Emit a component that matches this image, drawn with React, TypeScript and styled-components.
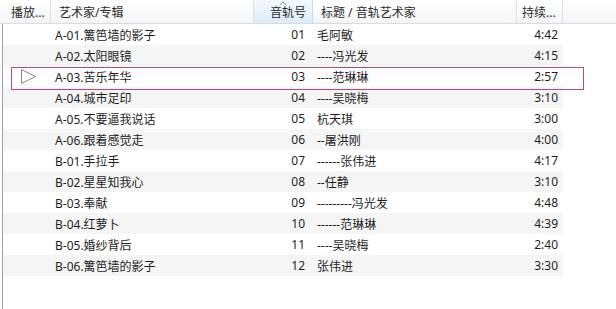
import React from "react";
import styled, { createGlobalStyle, css } from "styled-components";

const Global = createGlobalStyle`
  html, body { margin: 0; padding: 0; background: #fff; }
  body { font-family: "Noto Sans", "Noto Sans CJK SC", sans-serif; font-size: 12px; color: #1e1e1e; }
`;

const COLS = "51px 203px 59px 204px 46px 1fr";

const Frame = styled.div`
  width: 616px;
  height: 309px;
  display: flex;
  flex-direction: column;
  overflow: hidden;
  background: #fff;
`;

const Header = styled.div`
  display: grid;
  grid-template-columns: ${COLS};
  height: 24px;
  box-sizing: border-box;
  background: linear-gradient(#ffffff, #f4f5f7);
  border-bottom: 1px solid #d8dbe0;
`;

const HeadCell = styled.div<{ $align?: "left" | "right"; $sorted?: boolean; $last?: boolean; $pl?: number }>`
  position: relative;
  display: flex;
  align-items: center;
  justify-content: ${(p) => (p.$align === "right" ? "flex-end" : "flex-start")};
  padding-left: ${(p) => (p.$align === "right" ? 0 : p.$pl ?? 8)}px;
  padding-right: ${(p) => (p.$align === "right" ? 6 : 0)}px;
  border-right: ${(p) => (p.$last ? "none" : "1px solid #dcdfe3")};
  color: #2a2a2a;
  white-space: nowrap;
  overflow: hidden;
  ${(p) =>
    p.$sorted &&
    css`
      background: linear-gradient(#f2f9fe, #dcecf9);
      border-right-color: #c4dcef;
    `}
`;

const SortCaret = styled.svg`
  position: absolute;
  top: 1px;
  left: 50%;
  margin-left: -4px;
`;

const Body = styled.div`
  flex: 1;
  margin-left: 2px;
  border-left: 1px solid #a3a3a3;
  display: flex;
  flex-direction: column;
`;

const Row = styled.div<{ $striped: boolean; $current?: boolean }>`
  position: relative;
  display: grid;
  grid-template-columns: 48px 203px 59px 204px 46px;
  height: 21px;
  align-items: center;
  background: ${(p) => (p.$striped ? "#f5f5f5" : "#ffffff")};
  width: 560px;
  ${(p) =>
    p.$current &&
    css`
      z-index: 1;
      &::after {
        content: "";
        position: absolute;
        left: 8px;
        top: 1px;
        width: 571px;
        height: 21px;
        border: 1px solid #c24a5e;
        pointer-events: none;
      }
    `}
`;

const Cell = styled.div<{ $align?: "left" | "right"; $pl?: number; $pr?: number }>`
  display: flex;
  align-items: center;
  justify-content: ${(p) => (p.$align === "right" ? "flex-end" : "flex-start")};
  padding-left: ${(p) => p.$pl ?? 0}px;
  padding-right: ${(p) => p.$pr ?? 0}px;
  white-space: nowrap;
  overflow: hidden;
  height: 100%;
`;

const PlayIcon = () => (
  <svg width="17" height="17" viewBox="0 0 17 17">
    <path d="M1.5 1.5 L15.5 8.5 L1.5 15.5 Z" fill="none" stroke="#8a8a8a" strokeWidth="1" />
  </svg>
);

const tracks = [
  ["A-01.篱笆墙的影子", "01", "毛阿敏", "4:42"],
  ["A-02.太阳眼镜", "02", "----冯光发", "4:15"],
  ["A-03.苦乐年华", "03", "----范琳琳", "2:57"],
  ["A-04.城市足印", "04", "----吴晓梅", "3:10"],
  ["A-05.不要逼我说话", "05", "杭天琪", "3:00"],
  ["A-06.跟着感觉走", "06", "--屠洪刚", "4:00"],
  ["B-01.手拉手", "07", "------张伟进", "4:17"],
  ["B-02.星星知我心", "08", "--任静", "3:10"],
  ["B-03.奉献", "09", "---------冯光发", "4:48"],
  ["B-04.红萝卜", "10", "------范琳琳", "4:39"],
  ["B-05.婚纱背后", "11", "----吴晓梅", "2:40"],
  ["B-06.篱笆墙的影子", "12", "张伟进", "3:30"],
];

export default function App() {
  return (
    <Frame>
      <Global />
      <Header>
        <HeadCell $pl={11}>播放...</HeadCell>
        <HeadCell>艺术家/专辑</HeadCell>
        <HeadCell $align="right" $sorted>
          <SortCaret width="8" height="5" viewBox="0 0 8 5">
            <path d="M0.5 4.5 L4 1 L7.5 4.5" fill="none" stroke="#8a9db0" strokeWidth="1" />
          </SortCaret>
          音轨号
        </HeadCell>
        <HeadCell>标题 / 音轨艺术家</HeadCell>
        <HeadCell $pl={5}>持续...</HeadCell>
        <HeadCell $last />
      </Header>
      <Body>
        {tracks.map((t, i) => (
          <Row key={t[1]} $striped={i % 2 === 1} $current={i === 2}>
            <Cell $pl={17}>{i === 2 ? <PlayIcon /> : null}</Cell>
            <Cell $pl={4}>{t[0]}</Cell>
            <Cell $align="right" $pr={8}>{t[1]}</Cell>
            <Cell $pl={4}>{t[2]}</Cell>
            <Cell $align="right" $pr={5}>{t[3]}</Cell>
          </Row>
        ))}
      </Body>
    </Frame>
  );
}
